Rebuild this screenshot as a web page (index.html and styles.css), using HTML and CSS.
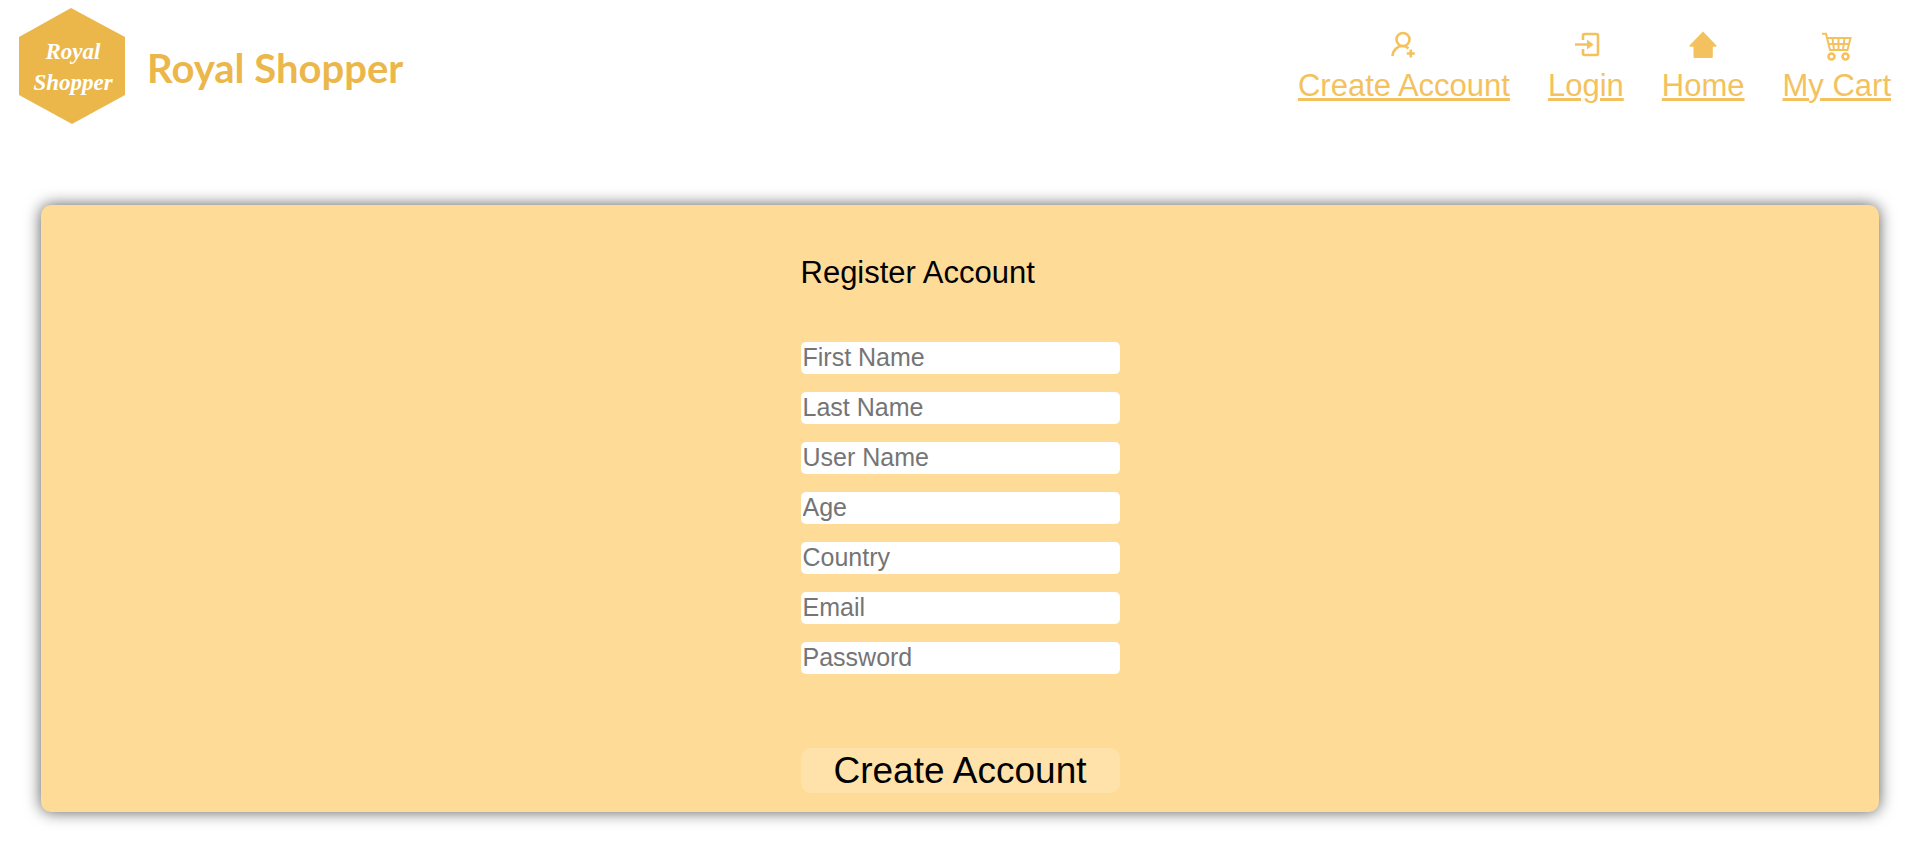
FILE: index.html
```html
<!DOCTYPE html>
<html lang="en">
<head>
<meta charset="utf-8">
<title>Royal Shopper</title>
<link rel="stylesheet" href="styles.css">
</head>
<body>
<header class="header">
  <div class="brand">
    <svg class="logo" viewBox="0 0 106 116" role="img" aria-label="Royal Shopper logo">
      <path class="logo-shape" d="M52 0 106 29V87L53 116 0 87V29Z"/>
      <text class="logo-text" x="54" y="51">Royal</text>
      <text class="logo-text" x="54" y="82">Shopper</text>
    </svg>
    <span class="brand-name">Royal Shopper</span>
  </div>
  <nav class="nav">
    <div class="nav-item">
      <svg class="icon" viewBox="0 0 30 30" aria-hidden="true">
        <g class="stroke"><circle cx="14" cy="8.500" r="6.500"/><path d="M3.500 25C4 19 8.500 15 13.500 15c2.500 0 4.500 1 6 2.500M21.800 18.500v8M17.800 22.500h8"/></g>
      </svg>
      <a class="nav-link" href="#">Create Account</a>
    </div>
    <div class="nav-item">
      <svg class="icon" viewBox="0 0 30 30" aria-hidden="true">
        <g class="stroke"><path d="M12 9V4.500q0-1.500 1.500-1.500h12q1.500 0 1.500 1.500v18q0 1.500-1.500 1.500h-12q-1.500 0-1.500-1.500V18M4 13.500h13"/></g>
        <path class="fill" d="M16 8.500 22.500 13.500 16 18.500Z"/>
      </svg>
      <a class="nav-link" href="#">Login</a>
    </div>
    <div class="nav-item">
      <svg class="icon" viewBox="0 0 30 30" aria-hidden="true">
        <path class="fill" d="M15 .5 28.500 14.500q0 1.200-1 1.200H24.800V26q0 1-1 1H6.500q-1 0-1-1V15.700H2.500q-1 0-1-1.200Z"/>
      </svg>
      <a class="nav-link" href="#">Home</a>
    </div>
    <div class="nav-item">
      <svg class="icon" viewBox="0 0 30 30" aria-hidden="true">
        <g class="stroke thin"><path d="M0 2.800H4L8 19H25.500L28.500 7H5M6.500 13H27M10.500 7 12 19M16.500 7v12M22.500 7 21 19"/></g>
        <g class="stroke"><circle cx="9.500" cy="25.500" r="3"/><circle cx="23.500" cy="25.500" r="3"/></g>
      </svg>
      <a class="nav-link" href="#">My Cart</a>
    </div>
  </nav>
</header>
<main class="card">
  <form class="form">
    <h1 class="title">Register Account</h1>
    <div class="fields">
      <input class="field" type="text" placeholder="First Name" aria-label="First Name">
      <input class="field" type="text" placeholder="Last Name" aria-label="Last Name">
      <input class="field" type="text" placeholder="User Name" aria-label="User Name">
      <input class="field" type="text" placeholder="Age" aria-label="Age">
      <input class="field" type="text" placeholder="Country" aria-label="Country">
      <input class="field" type="email" placeholder="Email" aria-label="Email">
      <input class="field" type="password" placeholder="Password" aria-label="Password">
    </div>
    <button class="submit" type="button">Create Account</button>
  </form>
</main>
</body>
</html>
```
FILE: styles.css
```css
* {
  box-sizing: border-box;
}

body {
  margin: 0;
  background: #fff;
  font-family: "Liberation Sans", Arial, sans-serif;
}

.header {
  display: flex;
  justify-content: space-between;
  align-items: center;
  padding: 8px 25px 8px 19px;
}

.brand {
  display: flex;
  align-items: center;
  gap: 22px;
}

.logo {
  width: 106px;
  height: 116px;
}

.logo-shape {
  fill: #ebb74b;
}

.logo-text {
  fill: #fff;
  font: italic bold 23px "Liberation Serif", serif;
  text-anchor: middle;
}

.brand-name {
  padding-top: 4px;
  color: #ebb74b;
  font: bold 40px/48px "Comic Sans MS", Lato, sans-serif;
}

.nav {
  display: flex;
  gap: 38px;
  padding-top: 2px;
}

.nav-item {
  display: flex;
  flex-direction: column;
  align-items: center;
  gap: 7px;
}

.icon {
  width: 30px;
  height: 30px;
}

.stroke {
  fill: none;
  stroke: #f3c25e;
  stroke-width: 2.6;
}

.thin {
  stroke-width: 2;
}

.fill {
  fill: #f3c25e;
}

.nav-link {
  color: #f3c25e;
  font-size: 31px;
  line-height: 36px;
  text-decoration-thickness: 3px;
}

.card {
  margin: 73px 37px 40px 41px;
  padding: 50px 20px 19px;
  border-radius: 10px;
  background: #ffdb98;
  box-shadow: 0 0 16px rgba(0, 0, 0, 0.65);
}

.form {
  display: flex;
  flex-direction: column;
  width: 100%;
  max-width: 319px;
  margin: 0 auto;
}

.title {
  margin: 0;
  font-size: 31px;
  font-weight: normal;
  line-height: 36px;
}

.fields {
  display: grid;
  gap: 18px;
  margin: 51px 0 74px;
}

.field {
  width: 100%;
  height: 32px;
  padding: 0 2px 2px;
  border: 0;
  border-radius: 5px;
  background: #fff;
  font: 25px "Liberation Sans", Arial, sans-serif;
}

.field::placeholder {
  color: #757575;
}

.submit {
  padding: 0;
  border: 0;
  border-radius: 10px;
  background: #ffe2aa;
  color: #000;
  font: 37px/45px "Liberation Sans", Arial, sans-serif;
}
```
